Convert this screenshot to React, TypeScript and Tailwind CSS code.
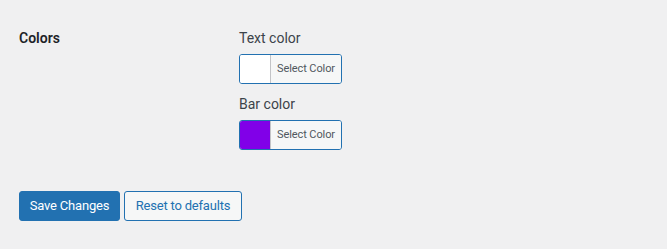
import React from "react";

function ColorPicker({ color, label }: { color: string; label: string }) {
  return (
    <div className="flex flex-col">
      <div className="text-[14px] leading-[20px] text-[#3c434a]">{label}</div>
      <div className="mt-[6px] flex h-[30px] w-[103px] overflow-hidden rounded-[3px] border border-[#2271b1]">
        <div className="w-[30px] h-full" style={{ backgroundColor: color }} />
        <div className="flex flex-1 items-center justify-center border-l border-[#c3c4c7] bg-[#f6f7f7] text-[11px] tracking-[-0.1px] text-[#50575e]">
          Select Color
        </div>
      </div>
    </div>
  );
}

export default function App() {
  return (
    <div
      className="min-h-[249px] w-full bg-[#f0f0f1] px-[19px] pt-[28px]"
      style={{ fontFamily: '"Segoe UI", Roboto, "Liberation Sans", sans-serif' }}
    >
      <div className="flex">
        <div className="w-[220px] text-[14px] font-semibold leading-[20px] text-[#1d2327]">Colors</div>
        <div className="flex flex-col gap-[10px]">
          <ColorPicker color="#ffffff" label="Text color" />
          <ColorPicker color="#8100e8" label="Bar color" />
        </div>
      </div>
      <div className="mt-[41px] flex gap-[4px]">
        <button className="h-[30px] w-[101px] rounded-[3px] border border-[#2271b1] bg-[#2271b1] text-[13px] tracking-[-0.2px] text-white">
          Save Changes
        </button>
        <button className="h-[30px] w-[118px] rounded-[3px] border border-[#2271b1] bg-[#f6f7f7] text-[13px] tracking-[-0.2px] text-[#2271b1]">
          Reset to defaults
        </button>
      </div>
    </div>
  );
}
